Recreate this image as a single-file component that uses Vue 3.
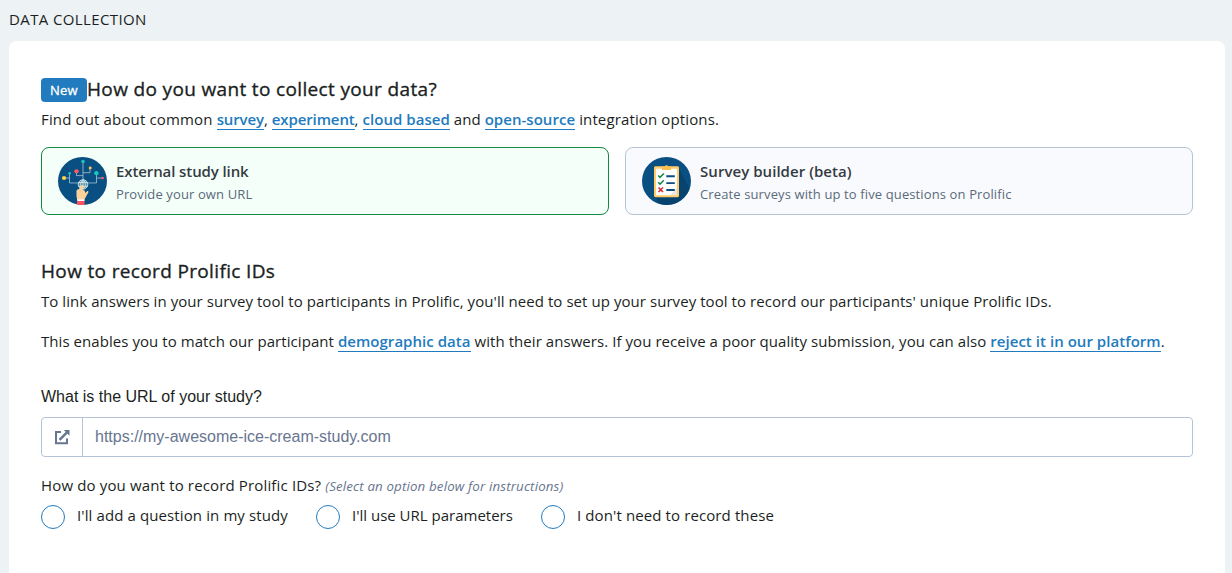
<script setup>
import { ref } from 'vue'

const url = ref('')
const recordOption = ref('')
const options = [
  { id: 'question', label: "I'll add a question in my study" },
  { id: 'params', label: "I'll use URL parameters" },
  { id: 'none', label: "I don't need to record these" },
]
</script>

<template>
  <main class="page">
    <h1 class="section-label">DATA COLLECTION</h1>
    <section class="panel">
      <div class="heading-row">
        <span class="badge">New</span>
        <h2 class="heading">How do you want to collect your data?</h2>
      </div>
      <p class="text intro"><span class="lead">Find out about common </span><a class="link">survey</a>, <a class="link">experiment</a>, <a class="link wide">cloud based</a> and <a class="link wide">open-source</a><span class="tail"> integration options.</span></p>

      <div class="cards">
        <div class="card selected">
          <svg class="card-icon" viewBox="0 0 49 49" preserveAspectRatio="none">
            <circle cx="24.5" cy="24.5" r="24.5" fill="#0a4f82" />
            <g fill="none" stroke="#a9c4d8" stroke-width=".8">
              <path d="M25 5v22M18.500 15v4H25M32 11.500v4.500H25M6 21.500h5.500M11.500 17v9.500H22M38.500 17v9.500H28M39 21.500h6" />
            </g>
            <g fill="#1bc5bd">
              <circle cx="25" cy="4.700" r="1.800" />
              <circle cx="11.600" cy="16.500" r="1.300" />
              <circle cx="38.400" cy="16.500" r="2.200" />
            </g>
            <g fill="#ff5a65">
              <circle cx="18.500" cy="14.600" r="2.200" />
              <circle cx="44.600" cy="21.500" r="1.300" />
            </g>
            <circle cx="6" cy="21.500" r="2.100" fill="#ffd04a" />
            <circle cx="32.200" cy="11.200" r="1.500" fill="#ffc64a" />
            <circle cx="25" cy="28" r="4.800" fill="#5595aa" stroke="#d5e8e8" stroke-width=".9" />
            <path d="M20.500 26h9M20.500 30h9M25 23.300v9.400M25 23.300c-3.300 3-3.300 6.500 0 9.400M25 23.300c3.300 3 3.300 6.500 0 9.400" fill="none" stroke="#e2eeee" stroke-width=".8" />
            <path d="M19.200 44l-.7-4v-5c0-1.500 1-2.200 2.500-2l1.600-3.500c.8-1.700 2.900-1 2.500.8l-.5 3.200 2.200.9.400 2.400 1.700-1.700c1-.8 2 .2 1.400 1.200l-2.800 5-1.400 2.800z" fill="#ffd29b" />
            <path d="M19.300 43.300h7.200v2h-7.200z" fill="#fff" />
            <path d="M19 45h7.500v3.900a24.500 24.500 0 0 1-7.500-.5z" fill="#ff5360" />
          </svg>
          <div class="card-body">
            <div class="card-title external">External study link</div>
            <div class="card-sub">Provide your own URL</div>
          </div>
        </div>
        <div class="card">
          <svg class="card-icon" viewBox="0 0 49 49" preserveAspectRatio="none">
            <circle cx="24.500" cy="24.500" r="24.500" fill="#0a4f82" />
            <path d="M36.500 11L47.500 32.500A24.500 24.500 0 0 1 17 47.800L13 40z" fill="#084370" />
            <rect x="12" y="9.500" width="25" height="31.500" rx="1.500" fill="#ffcc66" />
            <rect x="14" y="12" width="21" height="27" fill="#fff" />
            <path d="M20 9.800h2.700a1.900 1.900 0 0 1 3.600 0H29v3.400h-9z" fill="#fdbf54" />
            <path d="M28 39h7v-7z" fill="#eee5e2" />
            <path d="M24.300 19.600h8.500M24.300 26.600h8.500M24.300 33.700h8.500" stroke="#0a4f82" stroke-width="1.900" />
            <path d="M16.200 18.800l1.800 2 3.800-4M16.200 25.800l1.800 2 3.800-4" fill="none" stroke="#0f8a42" stroke-width="1.500" />
            <path d="M16.500 31.200l4.500 4.500M21 31.200l-4.500 4.500" stroke="#db2635" stroke-width="1.500" />
          </svg>
          <div class="card-body">
            <div class="card-title">Survey builder (beta)</div>
            <div class="card-sub">Create surveys with up to five questions on Prolific</div>
          </div>
        </div>
      </div>

      <h2 class="heading second">How to record Prolific IDs</h2>
      <p class="text first-par">To link answers in your survey tool to participants in Prolific, you'll need to set up your survey tool to record our participants' unique Prolific IDs.</p>
      <p class="text second-par">This enables you to match our participant <a class="link">demographic data</a> with their answers. If you receive a poor quality submission, you can also <a class="link">reject it in our platform</a>.</p>

      <label class="url-label" for="study-url">What is the URL of your study?</label>
      <div class="url-field">
        <span class="prepend">
          <svg width="16" height="16" viewBox="0 0 16 16" fill="none" stroke="#68758f" stroke-width="2">
            <path d="M7 3H2v11.200h11V9.500" />
            <path d="M5.500 10.800L13 3.300" stroke-width="2.400" />
            <path d="M9.800 1H15.500V6.700z" fill="#68758f" stroke="none" />
          </svg>
        </span>
        <input id="study-url" v-model="url" class="url-input" type="text" placeholder="https://my-awesome-ice-cream-study.com" />
      </div>

      <p class="text record-question">How do you want to record Prolific IDs? <em class="hint">(Select an option below for instructions)</em></p>
      <div class="radios">
        <label v-for="o in options" :key="o.id" class="radio" :class="o.id">
          <input v-model="recordOption" class="radio-input" type="radio" name="record" :value="o.id" />
          <span class="text radio-text">{{ o.label }}</span>
        </label>
      </div>
    </section>
  </main>
</template>

<style>
body {
  background: #edf2f5;
  overflow: hidden;
}
</style>

<style scoped>
* {
  box-sizing: border-box;
}
.page {
  height: 573px;
  padding: 0 7px 0 9px;
  overflow: hidden;
  background: #edf2f5;
  color: #1b1f23;
  font-family: "Open Sans", "Noto Sans", sans-serif;
}
h1, h2, p {
  margin: 0;
}
.section-label {
  height: 41px;
  font-size: 15px;
  font-weight: 400;
  letter-spacing: 0.38px;
  line-height: 39px;
}
.panel {
  height: 560px;
  padding: 36px 32px 0;
  border-radius: 8px;
  background: #fff;
}
.heading-row {
  display: flex;
  align-items: center;
  height: 26px;
}
.badge {
  width: 46px;
  height: 24px;
  border-radius: 4px;
  background: #217bbe;
  color: #fff;
  font-size: 13px;
  -webkit-text-stroke: 0.3px #fff;
  letter-spacing: 0.2px;
  line-height: 24px;
  text-align: center;
}
.heading {
  font-size: 19px;
  font-weight: 400;
  letter-spacing: 0.35px;
  line-height: 26px;
  white-space: nowrap;
  -webkit-text-stroke: 0.35px #1b1f23;
}
.heading-row .heading {
  margin-bottom: 2px;
}
.text {
  font-size: 15px;
  letter-spacing: 0.06px;
  line-height: 24px;
  white-space: nowrap;
}
.intro {
  margin-top: 4px;
}
.lead {
  letter-spacing: 0.15px;
}
.tail {
  letter-spacing: 0.13px;
}
.link {
  border-bottom: 1px solid #217bbe;
  color: #217bbe;
  font-weight: 600;
  letter-spacing: 0.04px;
}
.intro .link {
  letter-spacing: -0.12px;
}
.intro .link.wide {
  letter-spacing: 0.04px;
}
.cards {
  display: grid;
  grid-template-columns: 1fr 1fr;
  gap: 16px;
  margin-top: 16px;
}
.card {
  display: flex;
  align-items: center;
  gap: 9px;
  height: 68px;
  padding: 0 16px;
  border: 1px solid #b7c4d3;
  border-radius: 8px;
  background: #f9fafd;
}
.card.selected {
  border-color: #13893f;
  background: #f4fff9;
}
.card-icon {
  width: 49px;
  height: 48px;
}
.card-title {
  color: #343b42;
  font-size: 15px;
  font-weight: 600;
  letter-spacing: 0.05px;
  line-height: 24px;
}
.card-title.external {
  letter-spacing: -0.1px;
}
.card-sub {
  padding-top: 1px;
  margin-bottom: -1px;
  color: #5b6a7a;
  font-size: 13px;
  letter-spacing: 0.12px;
  line-height: 20px;
}
.second {
  margin-top: 43px;
}
.first-par {
  margin-top: 5px;
}
.second-par {
  margin-top: 16px;
}
.url-label {
  display: block;
  margin-top: 32px;
  font-family: "Liberation Sans", Arial, sans-serif;
  font-size: 16px;
  line-height: 24px;
}
.url-field {
  display: flex;
  height: 40px;
  margin-top: 8px;
  border: 1px solid #b4c4d6;
  border-radius: 4px;
}
.prepend {
  display: flex;
  align-items: center;
  justify-content: center;
  width: 41px;
  border-right: 1px solid #b4c4d6;
}
.url-input {
  flex: 1;
  padding: 0 12px;
  border: 0;
  outline: 0;
  background: transparent;
  font-family: "Liberation Sans", Arial, sans-serif;
  font-size: 16px;
}
.url-input::placeholder {
  color: #68758f;
}
.record-question {
  margin-top: 16px;
  letter-spacing: 0.15px;
}
.hint {
  color: #68758f;
  font-size: 13.3px;
  letter-spacing: 0.15px;
}
.radios {
  display: flex;
  margin-top: 7px;
}
.radio {
  display: flex;
  gap: 12px;
  height: 24px;
}
.radio.question {
  width: 275px;
}
.radio.params {
  width: 225px;
}
.radio-input {
  appearance: none;
  flex: none;
  width: 24px;
  height: 24px;
  margin: 0;
  border: 1px solid #217bbe;
  border-radius: 50%;
}
.radio-text {
  letter-spacing: 0.11px;
  line-height: 21px;
}
.params .radio-text {
  letter-spacing: 0;
}
</style>
